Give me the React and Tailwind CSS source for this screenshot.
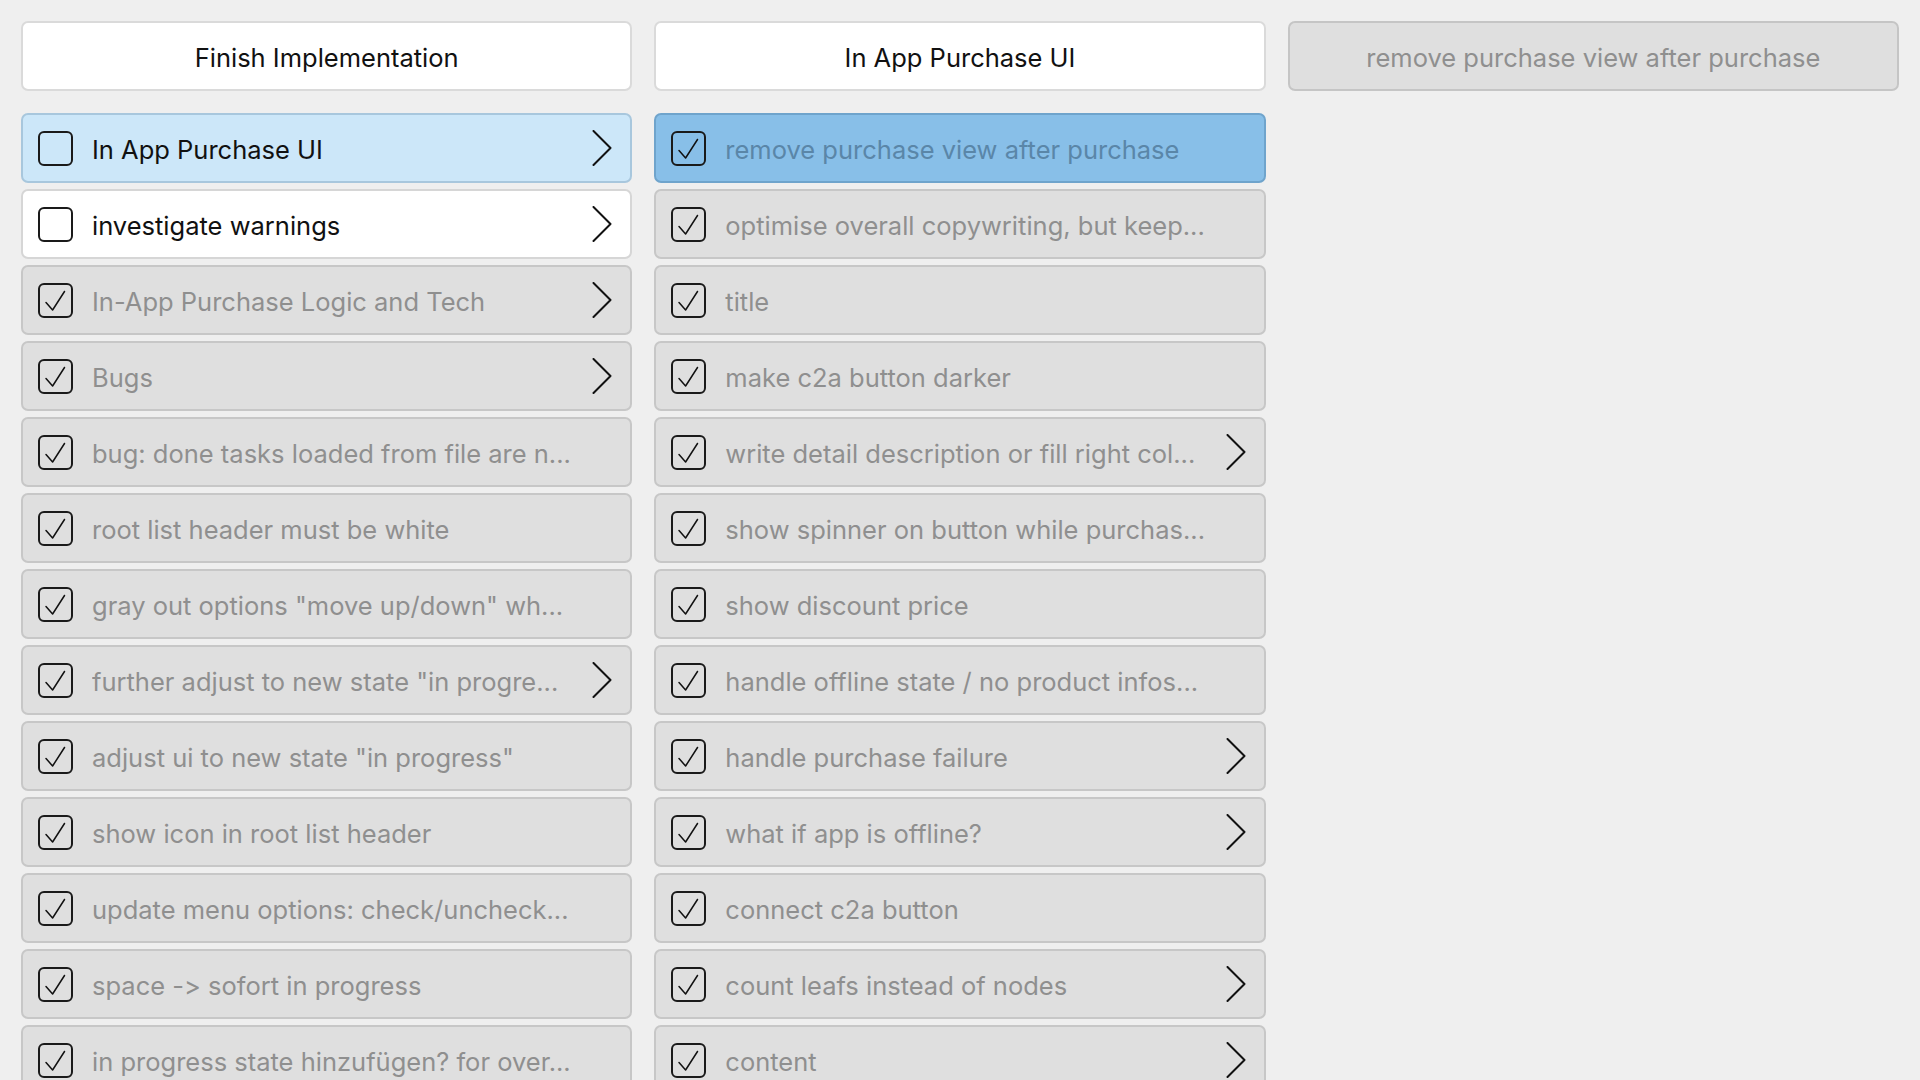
import React from 'react';

const leftItems = [
  { text: 'In App Purchase UI', done: false, more: true, state: 'focus' },
  { text: 'investigate warnings', done: false, more: true },
  { text: 'In-App Purchase Logic and Tech', done: true, more: true },
  { text: 'Bugs', done: true, more: true },
  { text: 'bug: done tasks loaded from file are n...', done: true },
  { text: 'root list header must be white', done: true },
  { text: 'gray out options "move up/down" wh...', done: true },
  { text: 'further adjust to new state "in progre...', done: true, more: true },
  { text: 'adjust ui to new state "in progress"', done: true },
  { text: 'show icon in root list header', done: true },
  { text: 'update menu options: check/uncheck...', done: true },
  { text: 'space -> sofort in progress', done: true },
  { text: 'in progress state hinzufügen? for over...', done: true },
];

const midItems = [
  { text: 'remove purchase view after purchase', done: true, state: 'selected' },
  { text: 'optimise overall copywriting, but keep...', done: true },
  { text: 'title', done: true },
  { text: 'make c2a button darker', done: true },
  { text: 'write detail description or fill right col...', done: true, more: true },
  { text: 'show spinner on button while purchas...', done: true },
  { text: 'show discount price', done: true },
  { text: 'handle offline state / no product infos...', done: true },
  { text: 'handle purchase failure', done: true, more: true },
  { text: 'what if app is offline?', done: true, more: true },
  { text: 'connect c2a button', done: true },
  { text: 'count leafs instead of nodes', done: true, more: true },
  { text: 'content', done: true, more: true },
];

function CheckBox({ done }) {
  return (
    <div className="w-[35px] h-[35px] shrink-0 rounded-[6px] border-2 border-[#1a1a1a] flex items-center justify-center">
      {done && (
        <svg width="31" height="31" viewBox="0 0 31 31" fill="none">
          <path d="M6 17.5 L12.6 25 L24.5 6.5" stroke="#111" strokeWidth="1.5" strokeLinecap="round" strokeLinejoin="round" />
        </svg>
      )}
    </div>
  );
}

function Chevron() {
  return (
    <svg width="20" height="36" viewBox="0 0 20 36" fill="none" className="shrink-0">
      <path d="M1.5 1 L18.5 18 L1.5 35" stroke="#111" strokeWidth="2" strokeLinecap="round" strokeLinejoin="round" />
    </svg>
  );
}

function Row({ item }) {
  let box = 'bg-[#dfdfdf] border-[#c7c7c7]';
  let txt = 'text-[#8f8f8f]';
  if (item.state === 'focus') {
    box = 'bg-[#cce7f9] border-[#a8c7dd]';
  } else if (item.state === 'selected') {
    box = 'bg-[#88bfe8] border-[#6fa4cc]';
    txt = 'text-[#5a86a8]';
  } else if (!item.done) {
    box = 'bg-white border-[#d6d6d6]';
  }
  if (!item.done) txt = 'text-[#111]';

  return (
    <div className={`h-[70px] shrink-0 rounded-[7px] border-2 flex items-center pl-[15px] pr-[18px] ${box}`}>
      <CheckBox done={item.done} />
      <span className={`ml-[19px] pt-[3px] flex-1 min-w-0 truncate text-[25.5px] leading-[32px] ${txt}`}>{item.text}</span>
      {item.more && <Chevron />}
    </div>
  );
}

function Header({ title, muted }) {
  return (
    <div
      className={`h-[70px] shrink-0 rounded-[7px] border-2 flex items-center justify-center pt-[3px] text-[25.5px] leading-[32px] ${
        muted ? 'bg-[#dfdfdf] border-[#c5c5c5] text-[#8f8f8f]' : 'bg-white border-[#dadada] text-[#111]'
      }`}
    >
      {title}
    </div>
  );
}

function Column({ title, items, muted }) {
  return (
    <div className="flex-1 min-w-0 flex flex-col">
      <Header title={title} muted={muted} />
      <div className="mt-[22px] flex flex-col gap-[6px]">
        {items.map((it, i) => (
          <Row key={i} item={it} />
        ))}
      </div>
    </div>
  );
}

export default function App() {
  return (
    <div className="w-[1920px] h-[1080px] overflow-hidden bg-[#efefef] p-[21px] flex gap-[22px] font-['Inter','Noto_Sans',sans-serif] [font-feature-settings:'calt'_0]">
      <Column title="Finish Implementation" items={leftItems} />
      <Column title="In App Purchase UI" items={midItems} />
      <Column title="remove purchase view after purchase" items={[]} muted />
    </div>
  );
}
